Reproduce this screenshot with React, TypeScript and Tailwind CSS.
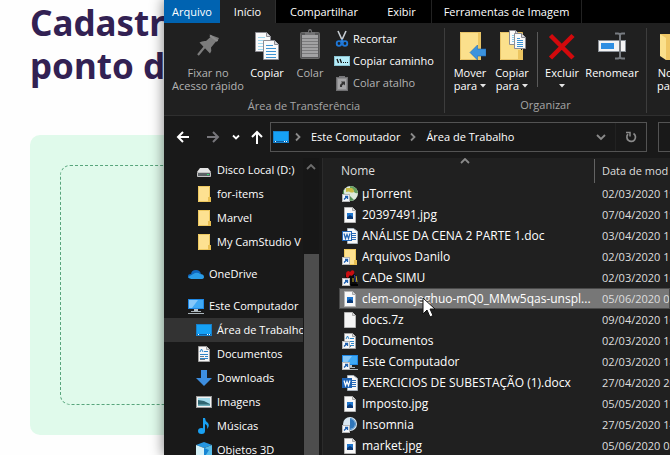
import type { ReactNode } from "react";

type IconProps = { className?: string };

function Svg({ w, h, children, className = "" }: { w: number; h: number; children: ReactNode; className?: string }) {
  return (
    <svg width={w} height={h} viewBox={`0 0 ${w} ${h}`} className={`block shrink-0 ${className}`} aria-hidden="true">
      {children}
    </svg>
  );
}

/* ---------- ribbon icons ---------- */

const PinIcon = () => (
  <Svg w={32} h={32}>
    <path d="M17.500 6.500 27 10l-1.500 3-1.500.5-5 6q1 3-1 6L7.500 14.500q3-2 6.500-1.500l4.500-4z" fill="#7c7c7c" />
    <path d="M13 18.500 6 27" stroke="#7c7c7c" strokeWidth="2.200" />
    <path d="M18 7.500 25.500 13" stroke="#8c8c8c" strokeWidth="2" />
  </Svg>
);

function Sheet({ x, y, w, h, line, step = 3 }: { x: number; y: number; w: number; h: number; line: string; step?: number }) {
  const rows: number[] = [];
  for (let i = y + 5; i < y + h - 2; i += step) rows.push(i);
  return (
    <g>
      <path d={`M${x + 0.5} ${y + 0.5}h${w - 5}l4 4v${h - 5}h-${w - 1}z`} fill="#fafafa" stroke="#8c8c93" />
      <path d={`M${x + w - 4.5} ${y + 0.5}v4h4`} fill="#d8d8dc" stroke="#8c8c93" />
      {rows.map((r) => (
        <path key={r} d={`M${x + 3} ${r + 0.5}h${r < y + 7 ? w - 9 : w - 6}`} stroke={line} />
      ))}
    </g>
  );
}

const CopyIcon = () => (
  <Svg w={32} h={32}>
    <Sheet x={4} y={4} w={16} h={20} line="#9fd6ee" />
    <Sheet x={12} y={12} w={16} h={20} line="#3e93d2" />
  </Svg>
);

const PasteIcon = () => (
  <Svg w={32} h={32}>
    <rect x="6.500" y="4.500" width="19" height="26" rx="1" fill="#58585a" stroke="#6b6b6b" />
    <rect x="8" y="7" width="16" height="22" fill="#a2a2a4" />
    <path d="M8 10.500h16M8 13.500h16M8 16.500h16M8 19.500h16M8 22.500h16M8 25.500h16" stroke="#7b7b7d" />
    <path d="M11 7V4h3q0-3 2-3t2 3h3v3z" fill="#747476" />
    <circle cx="16" cy="3.500" r="1" fill="#222" />
  </Svg>
);

const ScissorsIcon = () => (
  <Svg w={16} h={18}>
    <path d="M4 1l5 11M12 1 7 12" stroke="#c7cdd3" strokeWidth="1.600" />
    <circle cx="5" cy="13.500" r="2.300" fill="none" stroke="#1f78d8" strokeWidth="1.800" />
    <circle cx="11" cy="13.500" r="2.300" fill="none" stroke="#1f78d8" strokeWidth="1.800" />
    <circle cx="8" cy="10.500" r="1.200" fill="#1f78d8" />
  </Svg>
);

const PathIcon = () => (
  <Svg w={16} h={16}>
    <rect x="0.500" y="3.500" width="15" height="9" fill="#b5ecf8" stroke="#8cc4d2" />
    <path d="M3 6l1.500 4M6 6l1.500 4" stroke="#111" strokeWidth="1.300" />
    <path d="M9 9.500h1M11 9.500h1M13 9.500h1" stroke="#111" />
  </Svg>
);

const PasteLinkIcon = () => (
  <Svg w={16} h={16}>
    <rect x="2.500" y="2.500" width="11" height="13" fill="#8d8d8f" stroke="#6f6f71" />
    <rect x="4" y="4" width="8" height="10" fill="#a5a5a7" />
    <path d="M5 3V1h6v2z" fill="#77777a" />
    <path d="M6 12q-.5-3 2-4l-1-1.500h4v4l-1.200-1.200Q7.500 10 8 12z" fill="#333" />
  </Svg>
);

const MoveToIcon = () => (
  <Svg w={32} h={32}>
    <path d="M6 4h21v28H6z" fill="#fbe08c" />
    <path d="M24 4h3v28h-3z" fill="#ecc560" />
    <path d="M6.500 4.500h20v27h-20z" fill="none" stroke="#e8c468" />
    <path d="M16 24.500 23.500 17v4H32v7h-8.500v4z" fill="#3c93dd" stroke="#1d69b8" strokeWidth="0.600" />
  </Svg>
);

const CopyToIcon = () => (
  <Svg w={32} h={32}>
    <path d="M4 4h21v28H4z" fill="#fbe08c" />
    <path d="M4.500 4.500h22v27h-22z" fill="none" stroke="#e8c468" />
    <path d="M22 22h5v10h-5z" fill="#ecc560" />
    <Sheet x={13} y={2} w={11} h={15} line="#8ccbe8" step={2} />
    <Sheet x={18} y={5} w={12} h={16} line="#3e93d2" step={2} />
  </Svg>
);

const DeleteIcon = () => (
  <Svg w={32} h={32}>
    <path d="M4.500 7.500 27 30M27 7.500 4.500 30" stroke="#d3090c" strokeWidth="4.500" />
  </Svg>
);

const RenameIcon = () => (
  <Svg w={32} h={32}>
    <rect x="2.500" y="12.500" width="27" height="11" fill="#f4f4f4" stroke="#8a9097" />
    <rect x="5" y="15" width="13" height="6" fill="#2f8fe2" />
    <path d="M19 5.500h3q2 0 2 2v21q0 2-2 2h-3M29 5.500h-3q-2 0-2 2v21q0 2 2 2h3" fill="none" stroke="#777b80" strokeWidth="2" />
  </Svg>
);

const NewFolderIcon = () => (
  <Svg w={32} h={32}>
    <path d="M5 6h22v26H11z" fill="#efc664" />
    <path d="M5 6l6 4v22l-6-4z" fill="#fbe08c" />
  </Svg>
);

/* ---------- file and folder icons ---------- */

const ShortcutBadge = () => (
  <g>
    <rect x="0.500" y="8.500" width="7" height="7" fill="#f4f7fa" stroke="#b8b8b8" />
    <path d="M2 13.500 5 10.500M3 10.500h2.500V13" fill="none" stroke="#1d5fae" strokeWidth="1.300" />
  </g>
);

const DriveIcon = () => (
  <Svg w={16} h={16}>
    <path d="M4 6h8l3 4H1z" fill="#e4e4e4" />
    <path d="M1.500 10.500h13v4h-13z" fill="#5c6165" stroke="#c2c2c2" strokeWidth="1" />
    <path d="M11 12.500h2" stroke="#2ee06f" />
  </Svg>
);

const FolderIcon = ({ shortcut = false }: { shortcut?: boolean }) => (
  <Svg w={16} h={16}>
    <path d="M2 0h12v16H2z" fill="#fde191" />
    <path d="M2.500.5h11v15h-11z" fill="none" stroke="#eec85f" />
    <path d="M12 11h3v5h-3z" fill="#e9bf52" />
    {shortcut && <ShortcutBadge />}
  </Svg>
);

const CloudIcon = () => (
  <Svg w={16} h={16}>
    <path d="M3 9q0-5 5-5 4 0 5 4l-6 4H3Q0 12 0 10t3-2z" fill="#0f66bd" />
    <path d="M5 13q-4 0-5-2l7-4q3-1 5 1 4 0 4 3 0 2-3 2z" fill="#2a9ce8" />
  </Svg>
);

const ComputerIcon = ({ shortcut = false }: { shortcut?: boolean }) => (
  <Svg w={16} h={16}>
    <rect x="0" y="1" width="16" height="10" fill="#1e88e5" />
    <path d="M1 2h14v8H1z" fill="#3fa9f5" />
    <path d="M1 2h9L4 10H1z" fill="#86c8fa" />
    <path d="M6 11h4v2H6z" fill="#b9c2c8" />
    <path d="M3 13.500h10M0 15.500h16" stroke="#aab4ba" />
    {shortcut && <ShortcutBadge />}
  </Svg>
);

const DesktopIcon = () => (
  <Svg w={16} h={16}>
    <rect x="0.500" y="2.500" width="15" height="11" fill="#16a1f5" stroke="#1781cc" />
    <path d="M1 12.500h14" stroke="#0d5ea3" />
    <path d="M2 12.500h1M11 12.500h1M13 12.500h1" stroke="#fff" />
  </Svg>
);

const DocumentIcon = ({ shortcut = false }: { shortcut?: boolean }) => (
  <Svg w={16} h={16}>
    <path d="M2.500.5h8l3 3v12h-11z" fill="#f7f7f7" stroke="#a0a0a0" />
    <path d="M10.500.5v3h3" fill="#ddd" stroke="#a0a0a0" />
    <path d="M4 6 5.500 3 7 6M8 5.500h4M4 8.500h8M9 10.500h3M4 12.500h8" fill="none" stroke="#2e85c8" />
    <path d="M4 10.500h4M4 13.500h5" stroke="#6f7d86" />
    {shortcut && <ShortcutBadge />}
  </Svg>
);

const DownloadIcon = () => (
  <Svg w={16} h={16}>
    <path d="M5 0h6v8h5l-8 8-8-8h5z" fill="#3d8ee0" />
  </Svg>
);

const PictureIcon = () => (
  <Svg w={16} h={16}>
    <rect x="0.500" y="2.500" width="15" height="11" fill="#f3f3f3" stroke="#9a9a9a" />
    <rect x="2" y="4" width="12" height="8" fill="#a4dcec" />
    <path d="M2 6l6 1 6 3v2H2z" fill="#2f6672" />
    <path d="M2 10.500h12V12H2z" fill="#6fb0bd" />
  </Svg>
);

const MusicIcon = () => (
  <Svg w={16} h={16}>
    <ellipse cx="5.500" cy="13" rx="3.500" ry="3" fill="#19a0f2" />
    <path d="M7 0h2q0 3 3 5 2 3-1 6 1-4-2-5v7H7z" fill="#19a0f2" />
  </Svg>
);

const CubeIcon = () => (
  <Svg w={16} h={16}>
    <path d="M8 0l8 3-8 3-8-3z" fill="#2596e0" />
    <path d="M0 3l8 3v10l-8-3z" fill="#d4f1f8" />
    <path d="M16 3 8 6v10l8-3z" fill="#59bdea" />
    <path d="M8 6v10l5-8z" fill="#1685d4" />
  </Svg>
);

const TorrentIcon = () => (
  <Svg w={16} h={16}>
    <circle cx="8.500" cy="7.500" r="7.500" fill="#ddeadb" />
    <path d="M8 0q7 0 8 7-2 1-4-1-1-4-4-3z" fill="#659f60" />
    <path d="M4 2h6q2 1 2 4-3 1-4 0T4 6z" fill="#c7ba43" />
    <path d="M2 3v4q2 4 6 3l4 4q-3 1-5 1L1 9q-1-3 1-6z" fill="#549257" />
    <ShortcutBadge />
  </Svg>
);

const JpgIcon = () => (
  <Svg w={16} h={16}>
    <path d="M2.500.5h8l3 3v12h-11z" fill="#f8f8f8" stroke="#b5b5b5" />
    <path d="M10.500.5v3h3" fill="#d8d8d8" stroke="#a8a8a8" />
    <rect x="5" y="6" width="6" height="6" fill="#1d75cd" />
    <path d="M5 10l3-2 3 2v2H5z" fill="#0b3a78" />
  </Svg>
);

const BlankIcon = () => (
  <Svg w={16} h={16}>
    <path d="M2.500.5h8l3 3v12h-11z" fill="#f3f3f3" stroke="#b5b5b5" />
    <path d="M10.500.5v3h3" fill="#d8d8d8" stroke="#a8a8a8" />
  </Svg>
);

const WordIcon = ({ solid = false }: { solid?: boolean }) => (
  <Svg w={16} h={16}>
    <path d="M5.500.5h6l4 3v12h-10z" fill="#f8f8f8" stroke="#a9b3bd" />
    <path d="M10 5.500h4M10 7.500h4M10 9.500h4M10 11.500h4" stroke="#2b6cb8" />
    <rect x="0.500" y="3.500" width="9" height="9" fill={solid ? "#1f63b4" : "#eef4fa"} stroke="#1f63b4" />
    <path d="M2 5.500 3.500 10.500 5 6.500 6.500 10.500 8 5.500" fill="none" stroke={solid ? "#fff" : "#1f63b4"} strokeWidth="1.200" />
  </Svg>
);

const CadeIcon = () => (
  <Svg w={16} h={16}>
    <path d="M3 6q3-6 7-4l4 4 1 9H7z" fill="#0a0a0a" />
    <path d="M9 14h7v2H9z" fill="#000" />
    <path d="M4 4q0-3 3-3l1 1q2-3 4-1 1 2-1 4L9 6 8 5 6 8 4 7z" fill="#c90e12" />
    <path d="M11 8v4M14 6l1 6" stroke="#cfb52a" />
    <path d="M12.500 5l1 7" stroke="#2a3fae" />
    <ShortcutBadge />
  </Svg>
);

const InsomniaIcon = () => (
  <Svg w={16} h={16}>
    <circle cx="8" cy="7" r="7" fill="#d9e8f3" />
    <path d="M8 2a5 5 0 0 1 0 10z" fill="#2f76ba" />
    <path d="M8 1.500a5.500 5.500 0 0 1 0 11" fill="none" stroke="#4d8ec8" />
    <ShortcutBadge />
  </Svg>
);

/* ---------- small glyphs ---------- */

const Chevron = ({ d, className = "" }: { d: string } & IconProps) => (
  <svg width="10" height="10" viewBox="0 0 10 10" className={`block shrink-0 ${className}`} aria-hidden="true">
    <path d={d} fill="none" stroke="currentColor" strokeWidth="1.800" />
  </svg>
);
const RIGHT = "M3 1.500 6.500 5 3 8.500";
const DOWN = "M1 3 5 7 9 3";
const UP = "M1 7 5 3 9 7";

const Arrow = ({ d, className = "" }: { d: string } & IconProps) => (
  <svg width="14" height="14" viewBox="0 0 14 14" className={`block shrink-0 ${className}`} aria-hidden="true">
    <path d={d} fill="none" stroke="currentColor" strokeWidth="2" />
  </svg>
);

const Caret = () => (
  <svg width="6" height="4" viewBox="0 0 6 4" className="block shrink-0" aria-hidden="true">
    <path d="M0 0h6L3 3.500z" fill="#e6e6e6" />
  </svg>
);

/* ---------- ribbon ---------- */

function BigButton({ icon, lines, caret, dim, width }: { icon: ReactNode; lines: string[]; caret?: boolean; dim?: boolean; width: string }) {
  return (
    <button type="button" className={`flex shrink-0 flex-col items-center leading-[13px] ${width} ${dim ? "text-[#b4b4b4]" : "text-white"}`}>
      <span className="mb-[6px]">{icon}</span>
      <span className="whitespace-nowrap">{lines[0]}</span>
      <span className="flex h-[13px] items-center gap-[3px] whitespace-nowrap">
        {lines[1]}
        {caret && <Caret />}
      </span>
    </button>
  );
}

function SmallButton({ icon, label, dim }: { icon: ReactNode; label: string; dim?: boolean }) {
  return (
    <button type="button" className={`flex h-[22px] items-center gap-[3px] whitespace-nowrap ${dim ? "text-[#b4b4b4]" : "text-white"}`}>
      {icon}
      {label}
    </button>
  );
}

function Group({ title, width, children }: { title: string; width: string; children: ReactNode }) {
  return (
    <section aria-label={title} className={`flex shrink-0 flex-col ${width}`}>
      <div className="flex h-[70px]">{children}</div>
      <h2 className="pt-1 text-center leading-4 text-[#a6a6a6]">{title}</h2>
    </section>
  );
}

function Ribbon() {
  return (
    <div className="flex h-[93px] shrink-0 overflow-hidden border-b border-[#2f2f2f] bg-[#202020] pt-[5px] pb-[2px]">
      <Group title="Área de Transferência" width="w-[280px]">
        <div className="flex pl-1">
          <BigButton icon={<PinIcon />} lines={["Fixar no", "Acesso rápido"]} dim width="w-20" />
          <BigButton icon={<CopyIcon />} lines={["Copiar"]} width="w-[38px]" />
          <BigButton icon={<PasteIcon />} lines={["Colar"]} dim width="w-12" />
        </div>
        <div className="flex flex-col items-start">
          <SmallButton icon={<ScissorsIcon />} label="Recortar" />
          <SmallButton icon={<PathIcon />} label="Copiar caminho" />
          <SmallButton icon={<PasteLinkIcon />} label="Colar atalho" dim />
        </div>
      </Group>
      <div className="w-px shrink-0 bg-[#3d3d3d]" />
      <Group title="Organizar" width="w-[201px]">
        <div className="flex pl-1">
          <BigButton icon={<MoveToIcon />} lines={["Mover", "para"]} caret width="w-[42px]" />
          <BigButton icon={<CopyToIcon />} lines={["Copiar", "para"]} caret width="w-[42px]" />
          <div className="mx-1 mt-1 h-[55px] w-px bg-[#5a5a5a]" />
          <BigButton icon={<DeleteIcon />} lines={["Excluir", ""]} caret width="w-10" />
          <BigButton icon={<RenameIcon />} lines={["Renomear"]} width="w-[60px]" />
        </div>
      </Group>
      <div className="w-px shrink-0 bg-[#3d3d3d]" />
      <div className="flex shrink-0 pl-1">
        <BigButton icon={<NewFolderIcon />} lines={["Nova", "pasta"]} width="w-10" />
      </div>
    </div>
  );
}

/* ---------- data ---------- */

type TreeItem = { label: string; icon: ReactNode; root?: boolean; gap?: boolean; active?: boolean };

const tree: TreeItem[] = [
  { label: "Disco Local (D:)", icon: <DriveIcon /> },
  { label: "for-items", icon: <FolderIcon /> },
  { label: "Marvel", icon: <FolderIcon /> },
  { label: "My CamStudio V", icon: <FolderIcon /> },
  { label: "OneDrive", icon: <CloudIcon />, root: true, gap: true },
  { label: "Este Computador", icon: <ComputerIcon />, root: true, gap: true },
  { label: "Área de Trabalho", icon: <DesktopIcon />, active: true },
  { label: "Documentos", icon: <DocumentIcon /> },
  { label: "Downloads", icon: <DownloadIcon /> },
  { label: "Imagens", icon: <PictureIcon /> },
  { label: "Músicas", icon: <MusicIcon /> },
  { label: "Objetos 3D", icon: <CubeIcon /> },
];

type FileRow = { name: string; date: string; icon: ReactNode; selected?: boolean };

const files: FileRow[] = [
  { name: "µTorrent", date: "02/03/2020 19", icon: <TorrentIcon /> },
  { name: "20397491.jpg", date: "07/04/2020 19", icon: <JpgIcon /> },
  { name: "ANÁLISE DA CENA 2 PARTE 1.doc", date: "03/04/2020 11", icon: <WordIcon /> },
  { name: "Arquivos Danilo", date: "02/03/2020 11", icon: <FolderIcon shortcut /> },
  { name: "CADe SIMU", date: "02/03/2020 16", icon: <CadeIcon /> },
  { name: "clem-onojeghuo-mQ0_MMw5qas-unspl...", date: "05/06/2020 09", icon: <JpgIcon />, selected: true },
  { name: "docs.7z", date: "09/04/2020 16", icon: <BlankIcon /> },
  { name: "Documentos", date: "02/03/2020 18", icon: <DocumentIcon shortcut /> },
  { name: "Este Computador", date: "02/03/2020 18", icon: <ComputerIcon shortcut /> },
  { name: "EXERCICIOS DE SUBESTAÇÃO (1).docx", date: "27/04/2020 20", icon: <WordIcon solid /> },
  { name: "Imposto.jpg", date: "05/05/2020 17", icon: <JpgIcon /> },
  { name: "Insomnia", date: "27/05/2020 14", icon: <InsomniaIcon /> },
  { name: "market.jpg", date: "05/06/2020 08", icon: <JpgIcon /> },
];

/* ---------- window ---------- */

function Tabs() {
  return (
    <div role="tablist" className="flex h-[23px] shrink-0 overflow-hidden bg-black whitespace-nowrap text-white">
      <button type="button" role="tab" className="w-14 shrink-0 bg-[#0063b1]">Arquivo</button>
      <button type="button" role="tab" aria-selected="true" className="w-14 shrink-0 border-r border-[#2f2f2f] bg-[#202020]">Início</button>
      <button type="button" role="tab" className="w-24 shrink-0">Compartilhar</button>
      <button type="button" role="tab" className="w-[60px] shrink-0 border-r border-[#222]">Exibir</button>
      <button type="button" role="tab" className="w-[150px] shrink-0 border-r border-[#222]">Ferramentas de Imagem</button>
    </div>
  );
}

function NavBar() {
  return (
    <div className="flex h-[42px] shrink-0 items-center overflow-hidden bg-[#191919] pl-3 text-white">
      <button type="button" aria-label="Voltar"><Arrow d="M7 2 2 7l5 5M2 7h11" /></button>
      <button type="button" aria-label="Avançar" className="ml-4 text-[#77767b]"><Arrow d="M7 2l5 5-5 5M12 7H1" /></button>
      <button type="button" aria-label="Locais recentes" className="ml-[10px] p-px"><Chevron d="M2 3.500 5 6.500 8 3.500" /></button>
      <button type="button" aria-label="Para cima" className="ml-2"><Arrow d="M2 7l5-5 5 5M7 2v12" /></button>
      <div className="ml-[6px] flex h-[30px] flex-1 items-center border border-[#535353] pl-[2px]">
        <DesktopIcon />
        <Chevron d={RIGHT} className="ml-1 text-[#8a8a8a]" />
        <button type="button" className="ml-2 whitespace-nowrap">Este Computador</button>
        <Chevron d={RIGHT} className="ml-2 text-[#8a8a8a]" />
        <button type="button" className="ml-2 whitespace-nowrap">Área de Trabalho</button>
        <button type="button" aria-label="Locais anteriores" className="mr-[9px] ml-auto text-[#8a8a8a]"><Chevron d={DOWN} /></button>
        <button type="button" aria-label="Atualizar" className="flex h-full w-[31px] items-center justify-center border-l border-[#222] text-[#8a8a8a]">
          <svg width="12" height="12" viewBox="0 0 12 12" aria-hidden="true">
            <path d="M8.500 2.500A4.300 4.300 0 1 1 3 3.200" fill="none" stroke="currentColor" strokeWidth="1.700" />
            <path d="M1 1.500h4v4" fill="none" stroke="currentColor" strokeWidth="1.500" />
          </svg>
        </button>
      </div>
      <input aria-label="Pesquisar" className="ml-[11px] h-[30px] w-3 shrink-0 border border-r-0 border-[#535353] bg-[#191919] outline-none" />
    </div>
  );
}

function Sidebar() {
  return (
    <div className="flex w-[159px] shrink-0 border-r border-[#2b2b2b] bg-[#191919]">
      <nav className="w-[139px] shrink-0 overflow-hidden">
        <ul>
          {tree.map((t) => (
            <li key={t.label} className={t.gap ? "mt-2" : ""}>
              <button
                type="button"
                className={`flex h-6 w-full items-center gap-[5px] whitespace-nowrap text-white ${t.root ? "pl-6" : "pl-8"} ${t.active ? "bg-[#333333]" : ""}`}
              >
                {t.icon}
                {t.label}
              </button>
            </li>
          ))}
        </ul>
      </nav>
      <div className="flex w-4 shrink-0 flex-col items-center bg-[#171717]">
        <Chevron d={UP} className="mt-1 text-[#6e6e6e]" />
        <div className="mt-[82px] w-[15px] flex-1 bg-[#4d4d4d]" />
      </div>
    </div>
  );
}

function FileList() {
  return (
    <div className="min-w-0 flex-1 overflow-hidden bg-[#202020] pl-4">
      <table className="w-full table-fixed border-collapse text-left whitespace-nowrap">
        <colgroup>
          <col className="w-64" />
          <col />
        </colgroup>
        <thead>
          <tr className="h-[25px] text-[#dedede]">
            <th scope="col" className="relative p-0 text-[12px] font-normal">
              <Chevron d="M1 6 5 2 9 6" className="absolute -top-px left-[121px] text-[#8a8a8a]" />
              <span className="block border-r border-[#636363] pl-[2px] leading-6">Nome</span>
            </th>
            <th scope="col" className="p-0 pl-[7px] font-normal">Data de mod</th>
          </tr>
        </thead>
        <tbody>
          {files.map((f) => (
            <tr
              key={f.name}
              aria-selected={f.selected}
              className={`h-[21px] ${f.selected ? "bg-[#777777] outline outline-[#4a4a4a] -outline-offset-1" : ""}`}
            >
              <td className="p-0 pl-[3px] text-[12px] text-white">
                <span className="flex h-[21px] items-center gap-1">
                  {f.icon}
                  {f.name}
                </span>
              </td>
              <td className="overflow-hidden p-0 pl-[7px] text-[#dedede]">{f.date}</td>
            </tr>
          ))}
        </tbody>
      </table>
    </div>
  );
}

export default function App() {
  return (
    <div className="relative h-screen overflow-hidden bg-[#fefefe]">
      <main className="pt-px pl-[30px]">
        <h1 className="font-['Noto_Sans','Open_Sans',sans-serif] text-[35px] leading-[43px] font-bold whitespace-nowrap text-[#322153]">
          Cadastr
          <br />
          ponto de
        </h1>
        <div className="mt-12 h-[300px] rounded-[10px] bg-[#e0faeb] p-[30px]">
          <div className="h-full rounded-[10px] border border-dashed border-[#58a57c]" />
        </div>
      </main>

      <div className="absolute inset-y-0 right-0 left-[164px] flex flex-col overflow-hidden bg-[#191919] font-['Open_Sans','Noto_Sans',sans-serif] text-[11px] leading-4 shadow-[0_0_12px_1px_rgba(0,0,0,0.45)]">
        <Tabs />
        <Ribbon />
        <NavBar />
        <div className="flex min-h-0 flex-1">
          <Sidebar />
          <FileList />
        </div>
      </div>

      <svg width="14" height="22" viewBox="0 0 14 22" className="absolute top-[297px] left-[422px]" aria-hidden="true">
        <path d="M1 1v16l4-4 3 7 3-1.500-3-6.500h5z" fill="#fff" stroke="#111" strokeWidth="1" />
      </svg>
    </div>
  );
}
